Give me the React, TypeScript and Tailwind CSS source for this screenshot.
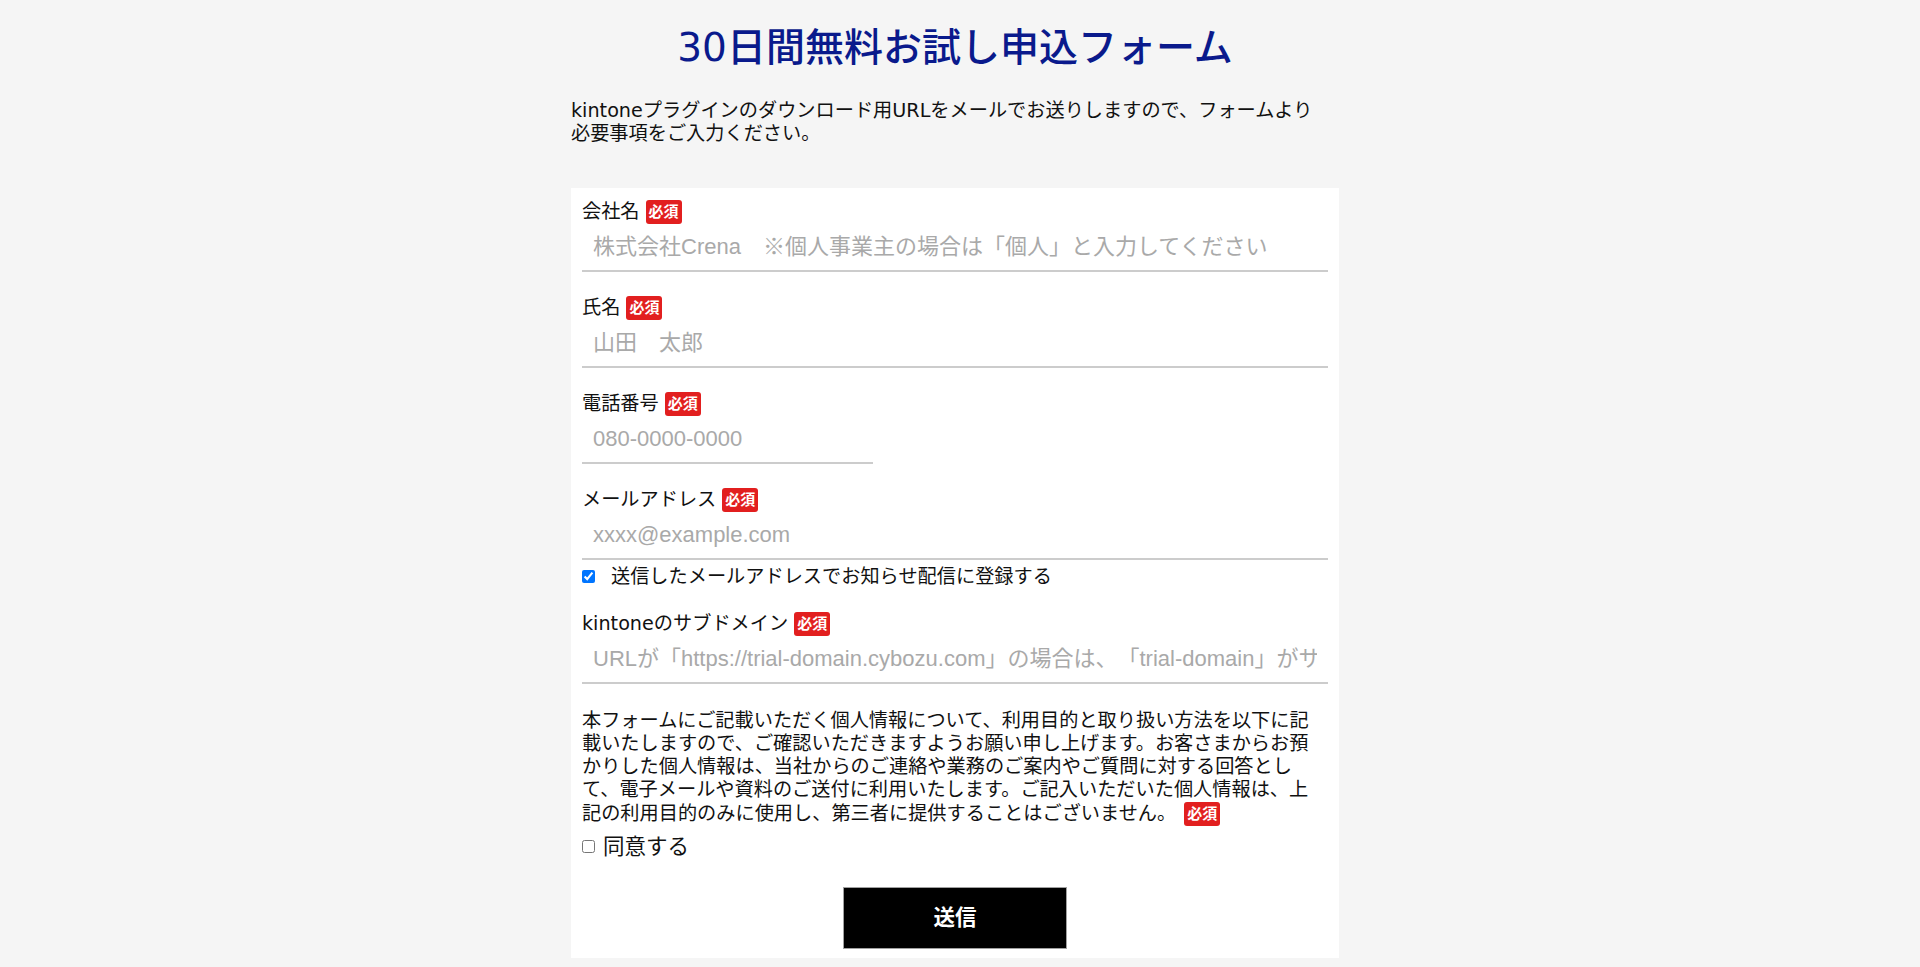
import React from "react";

const jp = "font-['DejaVu_Sans','Noto_Sans_CJK_JP',sans-serif]";

function Badge({ className = "" }: { className?: string }) {
  return (
    <span
      className={`inline-flex h-[24px] items-center rounded-[3px] bg-[#e21f1f] px-[3px] text-[15px] leading-[24px] font-bold text-white ${className}`}
    >
      必須
    </span>
  );
}

type FieldProps = {
  label: string;
  placeholder: string;
  type?: string;
  width?: string;
  className?: string;
};

function Field({ label, placeholder, type = "text", width = "w-full", className = "" }: FieldProps) {
  return (
    <div className={className}>
      <label className="flex h-[24px] items-center gap-[6px] text-[19.2px] leading-[24px] text-[#111]">
        <span>{label}</span>
        <Badge />
      </label>
      <input
        type={type}
        placeholder={placeholder}
        className={`block h-[48px] ${width} border-b-2 border-[#cccccc] bg-transparent px-[11px] font-['Liberation_Sans','Noto_Sans_CJK_JP',sans-serif] text-[22px] leading-[28px] text-[#333] outline-none placeholder:text-[#a9a9a9]`}
      />
    </div>
  );
}

export default function App() {
  return (
    <div className={`min-h-screen bg-[#f5f5f5] pr-[10px] [text-spacing-trim:space-all] ${jp}`}>
      <div className="mx-auto w-[768px]">
        <h1 className="pt-[25px] text-center text-[39px] leading-[46px] font-medium text-[#0a1a8c]">
          30日間無料お試し申込フォーム
        </h1>
        <p className="mt-[28px] text-[19.2px] leading-[23.3px] text-[#111]">
          kintoneプラグインのダウンロード用URLをメールでお送りしますので、フォームより
          <br />
          必要事項をご入力ください。
        </p>

        <form className="mt-[42px] bg-white px-[11px] pt-[12px] pb-[9px]" onSubmit={(e) => e.preventDefault()}>
          <Field
            label="会社名"
            placeholder="株式会社Crena　※個人事業主の場合は「個人」と入力してください"
            className="mb-[24px]"
          />
          <Field label="氏名" placeholder="山田　太郎" className="mb-[24px]" />
          <Field label="電話番号" placeholder="080-0000-0000" type="tel" width="w-[291px]" className="mb-[24px]" />
          <Field label="メールアドレス" placeholder="xxxx@example.com" type="email" />

          <label className="mt-[5px] mb-[23px] flex h-[24px] items-center gap-[16px] text-[19.2px] leading-[24px] text-[#111]">
            <input type="checkbox" defaultChecked className="h-[13px] w-[13px] accent-[#0075ff]" />
            <span>送信したメールアドレスでお知らせ配信に登録する</span>
          </label>

          <Field
            label="kintoneのサブドメイン"
            placeholder="URLが「https://trial-domain.cybozu.com」の場合は、「trial-domain」がサブドメインです"
          />

          <p className="mt-[25px] pr-[10px] text-[19.2px] leading-[23.3px] text-[#111]">
            本フォームにご記載いただく個人情報について、利用目的と取り扱い方法を以下に記載いたしますので、ご確認いただきますようお願い申し上げます。お客さまからお預かりした個人情報は、当社からのご連絡や業務のご案内やご質問に対する回答として、電子メールや資料のご送付に利用いたします。ご記入いただいた個人情報は、上記の利用目的のみに使用し、第三者に提供することはございません。
            <Badge className="ml-[8px] align-top" />
          </p>

          <label className="mt-[8px] flex h-[26px] items-center gap-[8px] text-[21.5px] leading-[26px] text-[#111]">
            <input type="checkbox" className="h-[13px] w-[13px] accent-[#0075ff]" />
            <span>同意する</span>
          </label>

          <button
            type="submit"
            className="mx-auto mt-[27px] block h-[62px] w-[224px] border border-[#a0a0a0] bg-black text-[21.5px] font-bold text-white"
          >
            送信
          </button>
        </form>
      </div>
    </div>
  );
}
